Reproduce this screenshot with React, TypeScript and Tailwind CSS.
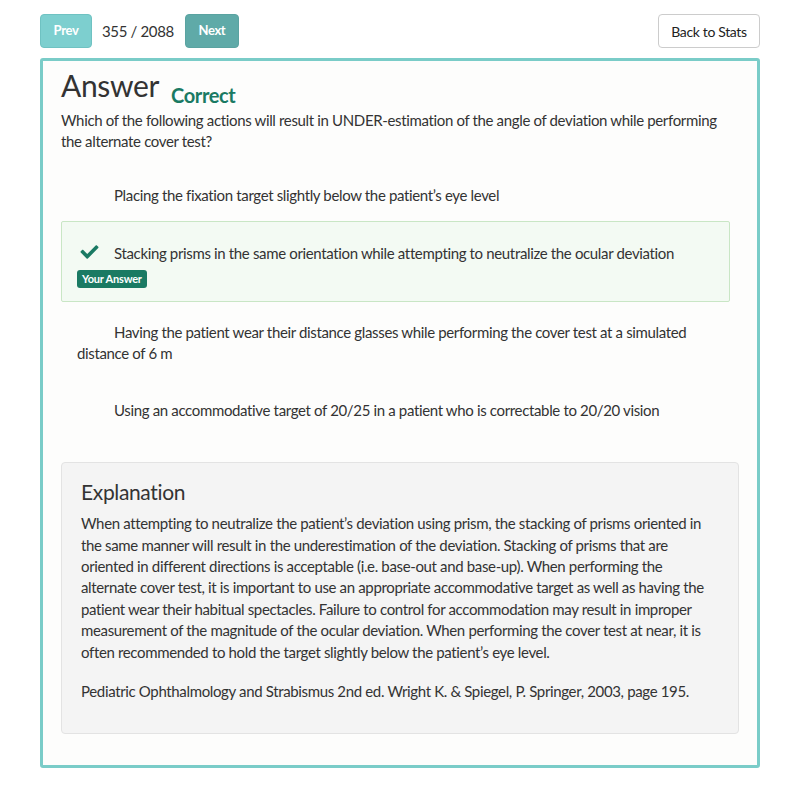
import { FaCheck } from "react-icons/fa";

const options = [
  { text: "Placing the fixation target slightly below the patient\u2019s eye level" },
  {
    text: "Stacking prisms in the same orientation while attempting to neutralize the ocular deviation",
    chosen: true,
  },
  {
    text: "Having the patient wear their distance glasses while performing the cover test at a simulated distance of 6 m",
  },
  { text: "Using an accommodative target of 20/25 in a patient who is correctable to 20/20 vision" },
];

function Option({ text, chosen }: { text: string; chosen?: boolean }) {
  return (
    <div
      className={
        chosen
          ? "mr-[9px] rounded-[2px] border border-[#c9e6c5] bg-[#f3faf3] px-[15px] pt-[21px] pb-[12px]"
          : "mr-[9px] border border-transparent px-[15px] pt-[19px] pb-[14px]"
      }
    >
      <div className="text-[15px] leading-[21.43px] text-[#333]">
        <span className="inline-block w-[37px] align-[-2px]">
          {chosen && <FaCheck className="ml-[2px] h-[18px] w-[21px] text-[#1a7a63]" />}
        </span>
        {text}
      </div>
      {chosen && (
        <span className="mt-[1px] inline-block rounded-[3px] bg-[#1a7a63] px-[5px] py-[1px] text-[11px] font-bold leading-[16px] tracking-[-0.2px] text-white">
          Your Answer
        </span>
      )}
    </div>
  );
}

export default function App() {
  return (
    <div className="min-h-[790px] bg-white px-10 pt-[14px] font-['Lato',sans-serif] tracking-[-0.35px] text-[#333]">
      <div className="flex items-center justify-between">
        <div className="flex items-center gap-[10px]">
          <button className="h-[34px] w-[52px] rounded-[4px] border border-[#6fc2c2] bg-[#7dcfcf] text-[13px] font-bold text-white">
            Prev
          </button>
          <span className="text-[15px] text-[#333]">355 / 2088</span>
          <button className="ml-[1px] h-[34px] w-[54px] rounded-[4px] border border-[#5aa3a1] bg-[#5faaa8] text-[13px] font-bold text-white">
            Next
          </button>
        </div>
        <button className="h-[34px] w-[102px] rounded-[4px] border border-[#ccc] bg-white text-[14px] text-[#222]">
          Back to Stats
        </button>
      </div>

      <div className="mt-[10px] rounded-[3px] border-[3px] border-[#7accc8] bg-[#fdfdfc] px-[18px] pt-[4px] pb-[31px]">
        <div className="flex items-end gap-[12px]">
          <h2 className="text-[30px] leading-[40px] text-[#333]">Answer</h2>
          <span className="mb-[-4px] text-[20px] font-bold leading-[28px] text-[#1a7a63]">Correct</span>
        </div>
        <p className="mt-[5px] text-[15px] leading-[21.43px] text-[#333]">
          Which of the following actions will result in UNDER-estimation of the angle of deviation while performing
          the alternate cover test?
        </p>

        <div className="mt-[12px] flex flex-col">
          {options.map((o, i) => (
            <Option key={i} text={o.text} chosen={o.chosen} />
          ))}
        </div>

        <div className="mt-[26px] rounded-[4px] border border-[#e3e3e3] bg-[#f4f4f4] px-[19px] pt-[16px] pb-[30px]">
          <h3 className="text-[21px] leading-[26px] text-[#333]">Explanation</h3>
          <p className="mt-[8px] text-[15px] leading-[21.43px] text-[#333]">
            When attempting to neutralize the patient&rsquo;s deviation using prism, the stacking of prisms oriented in
            the same manner will result in the underestimation of the deviation. Stacking of prisms that are oriented in
            different directions is acceptable (i.e. base-out and base-up). When performing the alternate cover test, it
            is important to use an appropriate accommodative target as well as having the patient wear their habitual
            spectacles. Failure to control for accommodation may result in improper measurement of the magnitude of the
            ocular deviation. When performing the cover test at near, it is often recommended to hold the target
            slightly below the patient&rsquo;s eye level.
          </p>
          <p className="mt-[18px] text-[15px] leading-[21.43px] text-[#333]">
            Pediatric Ophthalmology and Strabismus 2nd ed. Wright K. &amp; Spiegel, P. Springer, 2003, page 195.
          </p>
        </div>
      </div>
    </div>
  );
}
